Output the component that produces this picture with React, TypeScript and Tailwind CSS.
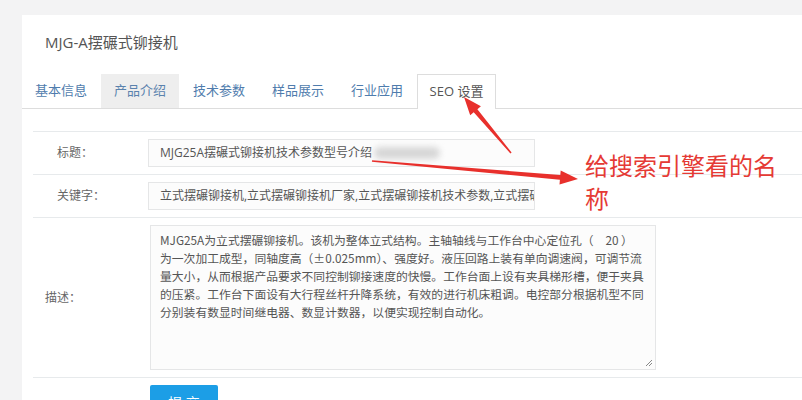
import React from 'react';

const tabs = ['基本信息', '产品介绍', '技术参数', '样品展示', '行业应用', 'SEO 设置'];

const description = [
  'MJG25A为立式摆碾铆接机。该机为整体立式结构。主轴轴线与工作台中心定位孔（　20 ）',
  '为一次加工成型，同轴度高（±0.025mm）、强度好。液压回路上装有单向调速阀，可调节流',
  '量大小，从而根据产品要求不同控制铆接速度的快慢。工作台面上设有夹具梯形槽，便于夹具',
  '的压紧。工作台下面设有大行程丝杆升降系统，有效的进行机床粗调。电控部分根据机型不同',
  '分别装有数显时间继电器、数显计数器，以便实现控制自动化。',
];

// tapered red arrow from tail to tip
function arrowPoints(x1: number, y1: number, x2: number, y2: number) {
  const dx = x2 - x1;
  const dy = y2 - y1;
  const len = Math.hypot(dx, dy);
  const ux = dx / len;
  const uy = dy / len;
  const nx = -uy;
  const ny = ux;
  const head = 18;
  const hx = x2 - ux * head;
  const hy = y2 - uy * head;
  const pts = [
    [x1 + nx * 0.8, y1 + ny * 0.8],
    [hx + nx * 2.4, hy + ny * 2.4],
    [hx + nx * 7, hy + ny * 7],
    [x2, y2],
    [hx - nx * 7, hy - ny * 7],
    [hx - nx * 2.4, hy - ny * 2.4],
    [x1 - nx * 0.8, y1 - ny * 0.8],
  ];
  return pts.map((p) => p.map((v) => v.toFixed(1)).join(',')).join(' ');
}

export default function App() {
  return (
    <div
      className="relative h-[400px] overflow-hidden bg-[#f3f3f4] pl-[22px] pt-[15px]"
      style={{ fontFamily: '"Open Sans", "Noto Sans CJK SC", sans-serif' }}
    >
      <div className="h-[420px] bg-white">
        {/* 标题 */}
        <div className="h-[59px] pl-[23px] pt-[18px] text-[15px] leading-[18px] text-[#555]">
          MJG-A摆碾式铆接机
        </div>

        {/* 选项卡 */}
        <div className="flex h-[35px] border-b border-[#ddd]">
          {tabs.map((tab, idx) => {
            const active = idx === tabs.length - 1;
            const hover = idx === 1;
            return (
              <div
                key={tab}
                className={
                  active
                    ? 'mr-[1px] -mb-[1px] flex h-[35px] w-[79px] items-center justify-center border border-b-0 border-[#ddd] bg-white text-[13px] text-[#555]'
                    : hover
                      ? 'mr-[1px] flex h-[34px] w-[78px] items-center justify-center bg-[#eee] text-[13px] text-[#5a82ad]'
                      : 'mr-[1px] flex h-[34px] w-[78px] items-center justify-center text-[13px] text-[#4f7cad]'
                }
              >
                {tab}
              </div>
            );
          })}
        </div>

        {/* 表单 */}
        <div className="pl-[11px] pt-[22px] text-[#555]">
          <div className="flex h-[43px] items-center border-t border-[#e7eaec]">
            <div className="w-[115px] pl-[24px] text-[12px] text-[#666]">标题：</div>
            <div className="flex h-[28px] w-[387px] items-center border border-[#e5e6e7] bg-[#fcfcfc] pl-[11px] text-[12px] whitespace-nowrap">
              MJG25A摆碾式铆接机技术参数型号介绍
              <span className="ml-[2px] inline-block h-[12px] w-[66px] rounded-full bg-[#d6d6d6] blur-[3px]" />
            </div>
          </div>

          <div className="flex h-[43px] items-center border-t border-[#e7eaec]">
            <div className="w-[115px] pl-[24px] text-[12px] text-[#666]">关键字：</div>
            <div className="flex h-[28px] w-[387px] items-center overflow-hidden border border-[#e5e6e7] bg-[#fcfcfc] pl-[11px] pr-[4px] text-[12px] whitespace-nowrap">
              立式摆碾铆接机,立式摆碾铆接机厂家,立式摆碾铆接机技术参数,立式摆碾铆接机价格
            </div>
          </div>

          <div className="flex h-[160px] items-center border-t border-[#e7eaec]">
            <div className="w-[117px] pl-[12px] text-[12px] text-[#666]">描述：</div>
            <div
              className="relative h-[145px] w-[506px] overflow-hidden border border-[#e5e6e7] bg-[#fcfcfc] pl-[9px] pt-[5px] text-[11.8px] leading-[18px] text-[#555]"
              style={{ fontFamily: '"Noto Sans CJK SC", sans-serif' }}
            >
              {description.map((line) => (
                <div key={line} className="whitespace-nowrap">
                  {line}
                </div>
              ))}
              <svg className="absolute bottom-[2px] right-[2px]" width="8" height="8" viewBox="0 0 8 8">
                <path d="M7 1 L1 7 M7 4 L4 7" stroke="#888" strokeWidth="1" fill="none" />
              </svg>
            </div>
          </div>

          <div className="border-t border-[#e7eaec] pl-[117px] pt-[7px]">
            <button className="h-[34px] w-[68px] rounded-[2px] bg-[#1c9ee6] text-[14px] text-white">
              提 交
            </button>
          </div>
        </div>
      </div>

      {/* 红色标注 */}
      <svg className="pointer-events-none absolute left-0 top-0" width="802" height="400">
        <polygon points={arrowPoints(511, 153, 464, 97)} fill="#e8302c" />
        <polygon points={arrowPoints(372, 161, 578, 179)} fill="#e8302c" />
      </svg>
      <div
        className="absolute left-[585px] top-[148px] w-[200px] text-[24px] leading-[33px] text-[#e53a35]"
        style={{ fontFamily: '"Noto Sans CJK SC", sans-serif' }}
      >
        给搜索引擎看的名称
      </div>
    </div>
  );
}
